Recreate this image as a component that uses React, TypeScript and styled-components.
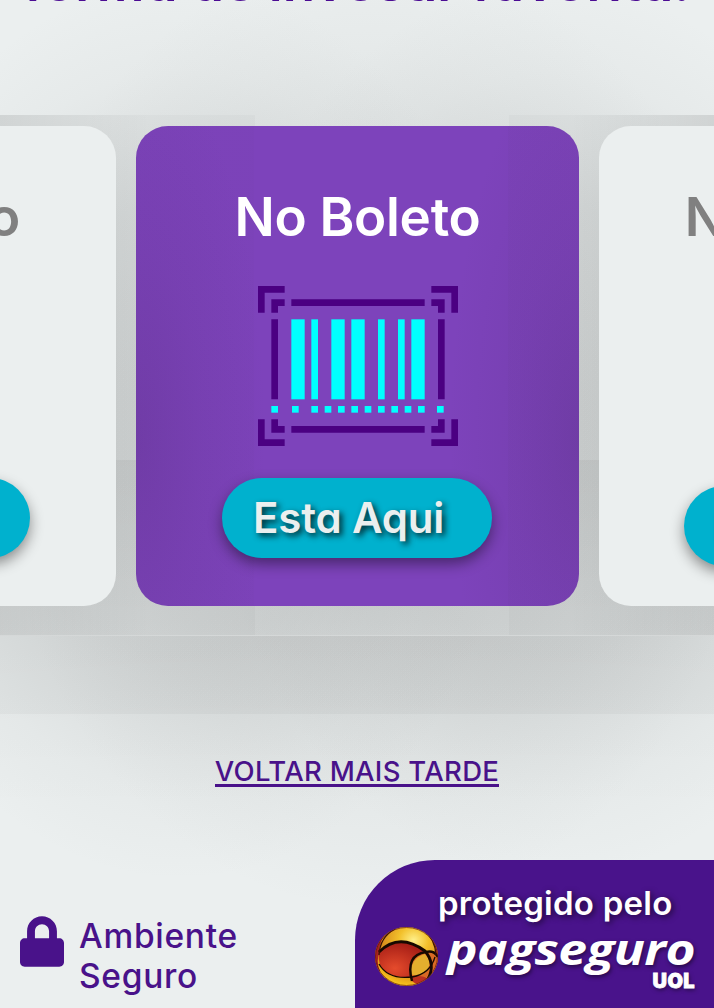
import React from "react";
import styled, { createGlobalStyle } from "styled-components";
import { FaLock } from "react-icons/fa";

const GlobalStyle = createGlobalStyle`
  * { box-sizing: border-box; }
  body {
    margin: 0;
    overflow: hidden;
    font-family: Inter, "Liberation Sans", sans-serif;
    font-feature-settings: "cv11";
    background: #ebefef;
  }
`;

const Page = styled.main`
  width: 714px;
  height: 1008px;
  overflow: hidden;
  display: flex;
  flex-direction: column;
  background:
    radial-gradient(ellipse 340px 450px at 180px 430px, rgba(140, 143, 143, 0.24) 0%, rgba(140, 143, 143, 0.18) 50%, rgba(140, 143, 143, 0.05) 80%, transparent 100%),
    radial-gradient(ellipse 380px 480px at 375px 430px, rgba(140, 143, 143, 0.22) 0%, rgba(140, 143, 143, 0.15) 50%, rgba(140, 143, 143, 0.05) 80%, transparent 100%),
    radial-gradient(ellipse 340px 450px at 550px 430px, rgba(140, 143, 143, 0.24) 0%, rgba(140, 143, 143, 0.18) 50%, rgba(140, 143, 143, 0.05) 80%, transparent 100%),
    #ebefef;
`;

const Header = styled.header`
  height: 115px;
  flex: none;
  display: flex;
  justify-content: center;
  align-items: flex-start;
`;

const Headline = styled.h1`
  margin: -51px 0 0;
  font-size: 53px;
  line-height: 66px;
  font-weight: 600;
  letter-spacing: 0;
  white-space: nowrap;
  color: #4b0c93;
`;

const Carousel = styled.section`
  height: 521px;
  flex: none;
  display: flex;
  justify-content: center;
  gap: 20px;
  padding: 11px 0 0 1px;
  border-bottom: 1px solid #d5d8d8;
  background:
    linear-gradient(rgba(0, 0, 0, 0) 345px, rgba(0, 0, 0, 0.045) 345px, rgba(0, 0, 0, 0.01) 100%),
    linear-gradient(90deg, rgba(0, 0, 0, 0.022) 255px, transparent 255px, transparent 509px, rgba(0, 0, 0, 0.022) 509px),
    linear-gradient(90deg, rgba(0, 0, 0, 0.08), transparent 150px, transparent 570px, rgba(0, 0, 0, 0.08));
`;

const Card = styled.article<{ $active?: boolean }>`
  width: 442.5px;
  height: 480px;
  flex: none;
  display: flex;
  flex-direction: column;
  align-items: center;
  padding-top: 58px;
  border-radius: 32px;
  color: ${(p) => (p.$active ? "#fff" : "#808080")};
  background: ${(p) =>
    p.$active
      ? "linear-gradient(90deg, rgba(65,45,75,.02) 118px, transparent 118px, transparent 372px, rgba(65,45,75,.03) 372px), radial-gradient(ellipse 130px 390px at 0 65%, rgba(85,45,125,.3), rgba(85,45,125,.12) 50%, transparent), radial-gradient(ellipse 130px 390px at 100% 65%, rgba(85,45,125,.3), rgba(85,45,125,.12) 50%, transparent), #7d43bb"
      : "#ebefef"};
`;

const CardTitle = styled.h2`
  margin: 0;
  height: 66px;
  font-size: 53px;
  line-height: 66px;
  font-weight: 600;
  letter-spacing: -0.3px;
  white-space: nowrap;
`;

const IconSlot = styled.div`
  height: 160px;
  margin-top: 36px;
`;

const PayButton = styled.button<{ $wide?: boolean }>`
  width: ${(p) => (p.$wide ? 272 : 270)}px;
  height: 80px;
  margin-top: ${(p) => (p.$wide ? 40 : 32)}px;
  margin-right: 1px;
  padding: 0 0 2px 31px;
  border: 0;
  border-radius: 40px;
  background: #00b1ce;
  box-shadow: 0 6px 14px rgba(0, 0, 0, 0.42);
  color: #ebefef;
  text-align: left;
  font-family: inherit;
  font-feature-settings: inherit;
  font-size: 42px;
  font-weight: 600;
  letter-spacing: -0.15px;
  text-shadow: 3px 3px 6px rgba(0, 0, 0, 0.8);
  white-space: nowrap;
`;

const LaterArea = styled.div`
  flex: 1;
  display: flex;
  flex-direction: column;
  align-items: center;
  background:
    linear-gradient(rgba(0, 0, 0, 0.02), transparent 180px),
    linear-gradient(rgba(0, 0, 0, 0.03) 78px, transparent 78px);
`;

const LaterLink = styled.a`
  margin-top: 117px;
  font-size: 27.5px;
  line-height: 36px;
  font-weight: 500;
  letter-spacing: 0.3px;
  color: #49128a;
  border-bottom: 3px solid #49128a;
  height: 34px;
  white-space: nowrap;
`;

const Footer = styled.footer`
  height: 148px;
  flex: none;
  display: flex;
  justify-content: space-between;
`;

const Secure = styled.div`
  display: flex;
  padding: 56px 0 0 20px;
  gap: 15px;
  font-size: 33.5px;
  line-height: 40px;
  font-weight: 500;
  color: #49128a;
`;

const SecureText = styled.div`
  width: 180px;
  letter-spacing: 0.7px;
`;

const Badge = styled.div`
  width: 359px;
  padding-top: 24px;
  border-top-left-radius: 80px;
  background: #49138b;
  color: #fff;
`;

const BadgeTitle = styled.div`
  padding-left: 83px;
  height: 40px;
  line-height: 39px;
  font-size: 33px;
  font-weight: 600;
  letter-spacing: 0.25px;
  text-shadow: 2px 2px 6px rgba(0, 0, 0, 0.6);
  white-space: nowrap;
`;

const Brand = styled.div`
  display: flex;
  padding: 2px 0 0 19px;
`;

const WordMark = styled.div`
  display: flex;
  flex-direction: column;
  margin: 1px 0 0 7px;
  width: 249px;
  text-shadow: 1px 2px 4px rgba(0, 0, 0, 0.5);
`;

const BrandName = styled.span`
  height: 46px;
  font-family: "Open Sans", sans-serif;
  font-style: italic;
  font-weight: 700;
  font-size: 43px;
  line-height: 44px;
  letter-spacing: -0.5px;
  white-space: nowrap;
  transform: scaleX(1.2);
  transform-origin: left;
`;

const Uol = styled.span`
  align-self: flex-end;
  margin-right: 1px;
  font-weight: 900;
  font-size: 20px;
  line-height: 16px;
  letter-spacing: 0.4px;
  -webkit-text-stroke: 0.8px #fff;
`;

const Barcode = () => {
  const bars = [[5, 2], [8, 1], [11, 2], [14, 2], [18, 1], [21, 1], [23, 2]];
  const dots = [2, 5.1, 8, 10, 12, 14, 16, 18, 20, 22, 24, 26.85];
  return (
    <svg width="200" height="160" viewBox="0 0 30 24">
      <path
        fill="#4b0082"
        d="M0 0h4v1H1v3H0zM2 2h2v1H3v1H2zM26 0h4v4h-1V1h-3zM26 2h2v2h-1V3h-1zM0 20h1v3h3v1H0zM2 20h1v1h1v1H2zM29 20h1v4h-4v-1h3zM27 20h1v2h-2v-1h1zM5 2h20v1H5zM5 21h20v1H5zM2 5h1v12H2zM27 5h1v12h-1z"
      />
      <g fill="#00ffff">
        {bars.map(([x, w]) => <rect key={x} x={x} y="5" width={w} height="12" />)}
        {dots.map((x) => <rect key={x} x={x} y="18" width="1" height="1" />)}
      </g>
    </svg>
  );
};

const Globe = () => (
  <svg width="66" height="62" viewBox="0 0 66 62">
    <defs>
      <radialGradient id="gold" cx="60%" cy="23%" r="75%">
        <stop offset="0" stopColor="#fff08a" />
        <stop offset=".3" stopColor="#f2c02b" />
        <stop offset=".7" stopColor="#d38318" />
        <stop offset="1" stopColor="#f8c51d" />
      </radialGradient>
      <radialGradient id="red" cx="35%" cy="75%" r="70%">
        <stop offset="0" stopColor="#e54b2c" />
        <stop offset="1" stopColor="#a92017" />
      </radialGradient>
      <clipPath id="ball"><ellipse cx="32.5" cy="30.5" rx="31.5" ry="29.5" /></clipPath>
    </defs>
    <g clipPath="url(#ball)">
      <rect width="66" height="62" fill="url(#gold)" />
      <path d="M0 0H20Q5 10 5 28Q2 36 6 45L0 50z" fill="#a72320" />
      <path d="M51 5Q62 14 62 28H66V0z" fill="#b23a1c" />
      <path d="M5 26Q25 6 51 25Q36 30 36 51Q14 53 6 39Q4 33 5 26z" fill="url(#red)" />
      <path d="M51 25Q66 27 64 38Q57 53 43 56Q34 54 36 45Q39 29 51 25z" fill="#d96a24" />
      <path d="M51 28Q38 31 36 48Q48 52 54 43Q58 36 51 28z" fill="#e4ae2e" />
      <path d="M36 51Q48 48 54 53L43 58Q37 56 36 51z" fill="#bb3020" />
      <path d="M5 26Q25 6 51 25Q62 38 54 53" fill="none" stroke="#170900" strokeWidth="2.8" />
      <path d="M38 55Q31 29 52 26Q60 24 64 31" fill="none" stroke="#170900" strokeWidth="2.5" />
      <path d="M5 38Q14 54 38 51Q56 48 61 31" fill="none" stroke="#170900" strokeWidth="1.3" />
      <path d="M5 29Q6 11 21 3M50 4Q61 13 62 29" fill="none" stroke="#381004" strokeWidth="1.3" />
    </g>
    <ellipse cx="32.5" cy="30.5" rx="31" ry="29" fill="none" stroke="#5c160b" strokeOpacity=".65" />
  </svg>
);

export default function App() {
  return (
    <>
      <GlobalStyle />
      <Page>
        <Header><Headline>forma de investir favorita!</Headline></Header>
        <Carousel>
          <Card>
            <CardTitle>No Débito</CardTitle>
            <IconSlot />
            <PayButton>Esta Aqui</PayButton>
          </Card>
          <Card $active>
            <CardTitle>No Boleto</CardTitle>
            <IconSlot><Barcode /></IconSlot>
            <PayButton>Esta Aqui</PayButton>
          </Card>
          <Card>
            <CardTitle>No Crédito</CardTitle>
            <IconSlot />
            <PayButton $wide>Esta Aqui</PayButton>
          </Card>
        </Carousel>
        <LaterArea><LaterLink>VOLTAR MAIS TARDE</LaterLink></LaterArea>
        <Footer>
          <Secure>
            <FaLock style={{ width: 44, height: 51 }} />
            <SecureText>Ambiente Seguro</SecureText>
          </Secure>
          <Badge>
            <BadgeTitle>protegido pelo</BadgeTitle>
            <Brand>
              <Globe />
              <WordMark>
                <BrandName>pagseguro</BrandName>
                <Uol>UOL</Uol>
              </WordMark>
            </Brand>
          </Badge>
        </Footer>
      </Page>
    </>
  );
}
